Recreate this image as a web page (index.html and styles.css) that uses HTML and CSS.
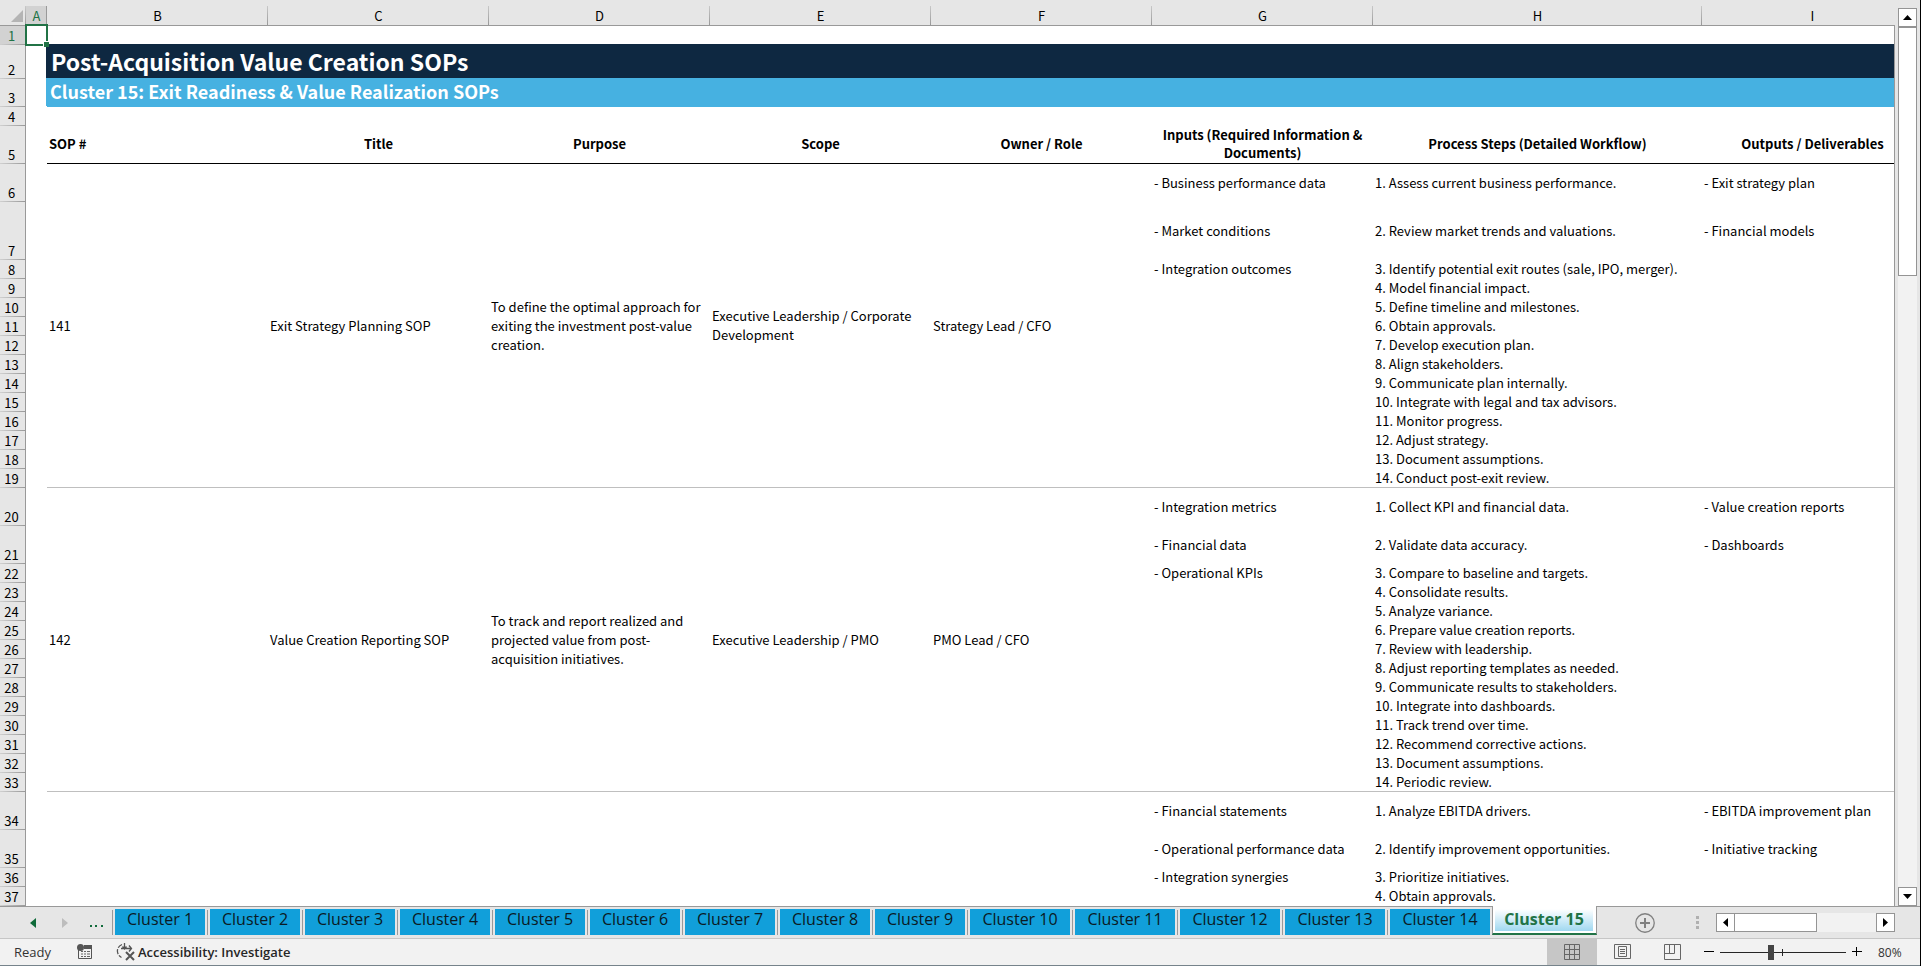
FILE: index.html
```
<!DOCTYPE html>
<html lang="en">
<head>
  <meta charset="UTF-8">
  <meta name="viewport" content="width=device-width, initial-scale=1.0">
  <title>Post-Acquisition Value Creation SOPs</title>
  <link rel="stylesheet" href="styles.css">
</head>
<body>

<main class="workspace">
  <div class="sheet">
    <table class="grid">
      <colgroup>
        <col class="col-num"><col class="col-a"><col class="col-std"><col class="col-std"><col class="col-std">
        <col class="col-std"><col class="col-std"><col class="col-std"><col class="col-wide"><col class="col-std">
      </colgroup>
      <thead>
        <tr>
          <th class="corner"><svg width="12" height="12" viewBox="0 0 12 12"><path d="M12 0v12H0z" fill="#b4b4b4"/></svg></th>
          <th class="selected" scope="col">A</th>
          <th scope="col">B</th>
          <th scope="col">C</th>
          <th scope="col">D</th>
          <th scope="col">E</th>
          <th scope="col">F</th>
          <th scope="col">G</th>
          <th scope="col">H</th>
          <th scope="col">I</th>
        </tr>
      </thead>
      <tbody>
        <tr><th class="selected" scope="row">1</th><td class="active-cell"></td><td colspan="8"></td></tr>
        <tr class="row-title"><th scope="row">2</th><td></td><td class="band-dark" colspan="8">Post-Acquisition Value Creation SOPs</td></tr>
        <tr class="row-subtitle"><th scope="row">3</th><td></td><td class="band-blue" colspan="8">Cluster 15: Exit Readiness &amp; Value Realization SOPs</td></tr>
        <tr><th scope="row">4</th><td></td><td colspan="8"></td></tr>
        <tr class="tall labels">
          <th scope="row">5</th><td></td>
          <td class="left">SOP #</td>
          <td>Title</td>
          <td>Purpose</td>
          <td>Scope</td>
          <td>Owner / Role</td>
          <td>Inputs (Required Information &amp; Documents)</td>
          <td>Process Steps (Detailed Workflow)</td>
          <td>Outputs / Deliverables</td>
        </tr>

        <!-- SOP 141 -->
        <tr class="tall">
          <th scope="row">6</th><td></td>
          <td class="merged" rowspan="14">141</td>
          <td class="merged" rowspan="14">Exit Strategy Planning SOP</td>
          <td class="merged" rowspan="14">To define the optimal approach for exiting the investment post-value creation.</td>
          <td class="merged" rowspan="14">Executive Leadership / Corporate Development</td>
          <td class="merged" rowspan="14">Strategy Lead / CFO</td>
          <td>- Business performance data</td><td>1. Assess current business performance.</td><td>- Exit strategy plan</td>
        </tr>
        <tr class="taller"><th scope="row">7</th><td></td><td>- Market conditions</td><td>2. Review market trends and valuations.</td><td>- Financial models</td></tr>
        <tr><th scope="row">8</th><td></td><td>- Integration outcomes</td><td>3. Identify potential exit routes (sale, IPO, merger).</td><td></td></tr>
        <tr><th scope="row">9</th><td></td><td></td><td>4. Model financial impact.</td><td></td></tr>
        <tr><th scope="row">10</th><td></td><td></td><td>5. Define timeline and milestones.</td><td></td></tr>
        <tr><th scope="row">11</th><td></td><td></td><td>6. Obtain approvals.</td><td></td></tr>
        <tr><th scope="row">12</th><td></td><td></td><td>7. Develop execution plan.</td><td></td></tr>
        <tr><th scope="row">13</th><td></td><td></td><td>8. Align stakeholders.</td><td></td></tr>
        <tr><th scope="row">14</th><td></td><td></td><td>9. Communicate plan internally.</td><td></td></tr>
        <tr><th scope="row">15</th><td></td><td></td><td>10. Integrate with legal and tax advisors.</td><td></td></tr>
        <tr><th scope="row">16</th><td></td><td></td><td>11. Monitor progress.</td><td></td></tr>
        <tr><th scope="row">17</th><td></td><td></td><td>12. Adjust strategy.</td><td></td></tr>
        <tr><th scope="row">18</th><td></td><td></td><td>13. Document assumptions.</td><td></td></tr>
        <tr class="last"><th scope="row">19</th><td></td><td></td><td>14. Conduct post-exit review.</td><td></td></tr>

        <!-- SOP 142 -->
        <tr class="tall">
          <th scope="row">20</th><td></td>
          <td class="merged" rowspan="14">142</td>
          <td class="merged" rowspan="14">Value Creation Reporting SOP</td>
          <td class="merged" rowspan="14">To track and report realized and projected value from post-acquisition initiatives.</td>
          <td class="merged" rowspan="14">Executive Leadership / PMO</td>
          <td class="merged" rowspan="14">PMO Lead / CFO</td>
          <td>- Integration metrics</td><td>1. Collect KPI and financial data.</td><td>- Value creation reports</td>
        </tr>
        <tr class="tall"><th scope="row">21</th><td></td><td>- Financial data</td><td>2. Validate data accuracy.</td><td>- Dashboards</td></tr>
        <tr><th scope="row">22</th><td></td><td>- Operational KPIs</td><td>3. Compare to baseline and targets.</td><td></td></tr>
        <tr><th scope="row">23</th><td></td><td></td><td>4. Consolidate results.</td><td></td></tr>
        <tr><th scope="row">24</th><td></td><td></td><td>5. Analyze variance.</td><td></td></tr>
        <tr><th scope="row">25</th><td></td><td></td><td>6. Prepare value creation reports.</td><td></td></tr>
        <tr><th scope="row">26</th><td></td><td></td><td>7. Review with leadership.</td><td></td></tr>
        <tr><th scope="row">27</th><td></td><td></td><td>8. Adjust reporting templates as needed.</td><td></td></tr>
        <tr><th scope="row">28</th><td></td><td></td><td>9. Communicate results to stakeholders.</td><td></td></tr>
        <tr><th scope="row">29</th><td></td><td></td><td>10. Integrate into dashboards.</td><td></td></tr>
        <tr><th scope="row">30</th><td></td><td></td><td>11. Track trend over time.</td><td></td></tr>
        <tr><th scope="row">31</th><td></td><td></td><td>12. Recommend corrective actions.</td><td></td></tr>
        <tr><th scope="row">32</th><td></td><td></td><td>13. Document assumptions.</td><td></td></tr>
        <tr class="last"><th scope="row">33</th><td></td><td></td><td>14. Periodic review.</td><td></td></tr>

        <!-- SOP 143 -->
        <tr class="tall">
          <th scope="row">34</th><td></td><td colspan="5"></td>
          <td>- Financial statements</td><td>1. Analyze EBITDA drivers.</td><td>- EBITDA improvement plan</td>
        </tr>
        <tr class="tall"><th scope="row">35</th><td></td><td colspan="5"></td><td>- Operational performance data</td><td>2. Identify improvement opportunities.</td><td>- Initiative tracking</td></tr>
        <tr><th scope="row">36</th><td></td><td colspan="5"></td><td>- Integration synergies</td><td>3. Prioritize initiatives.</td><td></td></tr>
        <tr><th scope="row">37</th><td></td><td colspan="5"></td><td></td><td>4. Obtain approvals.</td><td></td></tr>
      </tbody>
    </table>
  </div>

  <div class="vscroll">
    <button class="scroll-btn" aria-label="Scroll up"><svg width="9" height="5" viewBox="0 0 9 5"><path d="M0 5L4.500 0L9 5z"/></svg></button>
    <div class="vtrack"><div class="vthumb"></div></div>
    <button class="scroll-btn" aria-label="Scroll down"><svg width="9" height="5" viewBox="0 0 9 5"><path d="M0 0h9L4.500 5z"/></svg></button>
  </div>
</main>

<nav class="tabbar">
  <div class="tab-nav">
    <button class="plain" aria-label="Previous sheets"><svg width="6" height="10" viewBox="0 0 6 10"><path d="M6 0v10L0 5z" fill="#0f6b3a"/></svg></button>
    <button class="plain" aria-label="Next sheets"><svg width="6" height="10" viewBox="0 0 6 10"><path d="M0 0v10L6 5z" fill="#bdbdbd"/></svg></button>
    <button class="plain more" aria-label="More sheets"><svg width="13" height="2" viewBox="0 0 13 2"><path d="M0 0h2v2H0zM5 0h2v2H5zM11 0h2v2h-2z" fill="#0f6b3a"/></svg></button>
  </div>
  <div class="tabs">
    <button class="tab">Cluster 1</button>
    <button class="tab">Cluster 2</button>
    <button class="tab">Cluster 3</button>
    <button class="tab">Cluster 4</button>
    <button class="tab">Cluster 5</button>
    <button class="tab">Cluster 6</button>
    <button class="tab">Cluster 7</button>
    <button class="tab">Cluster 8</button>
    <button class="tab">Cluster 9</button>
    <button class="tab wide">Cluster 10</button>
    <button class="tab wide">Cluster 11</button>
    <button class="tab wide">Cluster 12</button>
    <button class="tab wide">Cluster 13</button>
    <button class="tab wide">Cluster 14</button>
    <button class="tab-active"><span>Cluster 15</span></button>
  </div>
  <button class="plain add" aria-label="New sheet">
    <svg width="20" height="20" viewBox="0 0 20 20" fill="none" stroke="#808080"><circle cx="10" cy="10" r="9.250" stroke-width="1.300"/><path d="M10 5v10M5 10h10" stroke-width="2"/></svg>
  </button>
  <div class="hscroll">
    <svg class="grip" width="3" height="13" viewBox="0 0 3 13"><path d="M0 0h3v3H0zM0 5h3v3H0zM0 10h3v3H0z" fill="#b0b0b0"/></svg>
    <button class="scroll-btn" aria-label="Scroll left"><svg width="5" height="9" viewBox="0 0 5 9"><path d="M5 0v9L0 4.500z"/></svg></button>
    <div class="htrack"><div class="hthumb"></div></div>
    <button class="scroll-btn" aria-label="Scroll right"><svg width="5" height="9" viewBox="0 0 5 9"><path d="M0 0v9L5 4.500z"/></svg></button>
  </div>
</nav>

<footer class="statusbar">
  <span class="ready">Ready</span>
  <svg class="macro" width="16" height="16" viewBox="0 0 16 16">
    <path d="M7 1h8v4H7z" fill="#555"/>
    <path d="M1.500 6v8.500h13V4" fill="none" stroke="#555"/>
    <path d="M4 7.500h2M7 7.500h2M10 7.500h3M4 10h2M7 10h2M10 10h3M4 12.500h2M7 12.500h2M10 12.500h3" stroke="#666"/>
    <circle cx="3.500" cy="3.500" r="3.500" fill="#555"/>
  </svg>
  <button class="plain access">
    <svg width="20" height="18" viewBox="0 0 20 18" fill="none" stroke="#555">
      <path d="M6 1.500C2.500 3 1 6 1.500 9c.4 2.500 2 4.500 4 5.500" stroke-width="1.300" stroke-dasharray="5 1.500"/>
      <path d="M8.500 0v6M5 5.500h10M6.500 3.500L8.500 6l2-2.500M13 2.500l2.500 3-2.500 3" stroke-width="1.300"/>
      <path d="M10 9l8 8M18 9l-8 8" stroke-width="2"/>
    </svg>
    Accessibility: Investigate
  </button>
  <div class="views">
    <button class="view on" aria-label="Normal">
      <svg width="17" height="17" viewBox="0 0 17 17" fill="none" stroke="#666"><path d="M.5.500h15v15H.5zM5.500.500v15M10.500.500v15M.5 5.500h15M.5 10.500h15"/></svg>
    </button>
    <button class="view" aria-label="Page layout">
      <svg width="17" height="17" viewBox="0 0 17 17" fill="none" stroke="#666"><path d="M.5.500h16v14H.5zM4.500 2.500h8v10h-8zM6 5.500h5M6 7.500h5M6 9.500h5"/></svg>
    </button>
    <button class="view" aria-label="Page break preview">
      <svg width="17" height="17" viewBox="0 0 17 17" fill="none" stroke="#666"><path d="M.5.500h16v15H.5zM.5 9.500h10V.500M5.500.500v9"/></svg>
    </button>
  </div>
  <div class="zoom">
    <button class="plain" aria-label="Zoom out"><svg width="10" height="10" viewBox="0 0 10 10"><path d="M0 4h10v1H0z"/></svg></button>
    <div class="slider"><input type="range" min="0" max="100" value="40" aria-label="Zoom"></div>
    <button class="plain" aria-label="Zoom in"><svg width="10" height="10" viewBox="0 0 10 10"><path d="M0 4h10v1H0zM4 0h1v9H4z"/></svg></button>
    <button class="plain percent">80%</button>
  </div>
</footer>

</body>
</html>
```
FILE: styles.css
```
* {
  box-sizing: border-box;
}

body {
  display: flex;
  flex-direction: column;
  height: 100vh;
  margin: 0;
  overflow: hidden;
  background: #e6e6e6;
  border-right: 1px solid #000;
  font-family: "Open Sans", sans-serif;
}

button {
  padding: 0;
  border: none;
  font-family: inherit;
  cursor: pointer;
}

svg {
  display: block;
}

.plain {
  display: flex;
  align-items: center;
  background: none;
}

/* worksheet */
.workspace {
  display: flex;
  flex: 1;
  min-height: 0;
}

.sheet {
  position: relative;
  flex: 1;
  min-width: 0;
  overflow: hidden;
}

.sheet::after {
  content: "";
  position: absolute;
  top: 25px;
  right: 0;
  bottom: 0;
  width: 1px;
  background: #999;
}

.grid {
  table-layout: fixed;
  width: 1923px;
  border-collapse: separate;
  border-spacing: 0;
  background: #fff;
  font-family: "Noto Sans CJK SC", sans-serif;
  font-size: 13px;
  line-height: 17px;
  color: #000;
}

.col-num { width: 26px; }
.col-a { width: 21px; }
.col-std { width: 221px; }
.col-wide { width: 329px; }

.grid th {
  padding: 0;
  font-weight: normal;
}

.grid td {
  height: 19px;
  padding: 0 2px 2px;
  vertical-align: middle;
}

.grid thead th {
  height: 26px;
  padding-top: 6px;
  border-bottom: 1px solid #999;
  background: linear-gradient(#c8c8c8, #999) right bottom / 1px 19px no-repeat #e6e6e6;
}

.grid thead .corner {
  padding: 7px 0 0 11px;
}

.grid tbody th {
  padding-right: 2px;
  border-right: 1px solid #999;
  background: linear-gradient(90deg, #d0d0d0, #999) left bottom / 100% 1px no-repeat #e6e6e6;
  line-height: 18px;
  vertical-align: bottom;
}

.grid thead th.selected {
  background: linear-gradient(#999, #999) right bottom / 1px 19px no-repeat,
    linear-gradient(#d2d2d2, #d2d2d2) left bottom / 100% 19px no-repeat #e6e6e6;
  color: #217346;
}

.grid tbody th.selected {
  background-color: #d2d2d2;
  color: #217346;
}

.grid .active-cell {
  position: relative;
}

.active-cell::before {
  content: "";
  position: absolute;
  inset: -2px -1px -1px -1px;
  border: 2px solid #217346;
}

.active-cell::after {
  content: "";
  position: absolute;
  right: -2px;
  bottom: -2px;
  width: 5px;
  height: 5px;
  border: solid #fff;
  border-width: 1px 0 0 1px;
  box-sizing: content-box;
  background: #217346;
}

.row-title td { height: 34px; }
.row-subtitle td { height: 28px; }
.tall td { height: 38px; }
.taller td { height: 58px; }

.grid .band-dark,
.grid .band-blue {
  color: #fff;
  font-weight: bold;
}

.grid .band-dark {
  padding: 0 4px 2px;
  background: #0e2841;
  box-shadow: -1px -1px #0e2841;
  font-size: 23px;
  line-height: 32px;
}

.grid .band-blue {
  padding: 0 3px 4px;
  background: #46b1e1;
  box-shadow: -1px -1px #46b1e1;
  font-size: 18px;
  line-height: 24px;
}

.labels td {
  line-height: 18px;
  text-align: center;
  font-weight: bold;
}

.labels td.left {
  text-align: left;
}

.labels td:nth-child(n+3) {
  box-shadow: inset 0 -1px #000;
}

.merged {
  line-height: 19px;
}

.merged,
.last td:nth-child(n+3) {
  box-shadow: inset 0 -1px #bfbfbf;
}

/* scroll bars */
.scroll-btn {
  display: flex;
  align-items: center;
  justify-content: center;
  width: 19px;
  height: 19px;
  border: 1px solid #949494;
  background: #fff;
}

.vscroll {
  display: flex;
  flex-direction: column;
  width: 19px;
  margin: 8px 3px 0 3px;
}

.vtrack {
  flex: 1;
  background: #f2f2f2;
}

.vthumb {
  height: 249px;
  border: 1px solid #949494;
  background: #fff;
}

/* sheet tabs */
.tabbar {
  display: flex;
  height: 32px;
  border-top: 1px solid #999;
}

.tab-nav {
  display: flex;
  gap: 26px;
  width: 112px;
  padding-left: 30px;
}

.tab-nav .more {
  margin-left: -4px;
  padding-top: 6px;
}

.tabs {
  display: flex;
}

/* thin divider sits in the gap left of every tab */
.tab {
  width: 95px;
  height: 28px;
  padding: 0 2px 4px 3px;
  border: none;
  background: linear-gradient(#999, #999) left bottom / 1px 25px no-repeat,
    linear-gradient(#119fda, #119fda) 3px 2px / calc(100% - 5px) 26px no-repeat;
  font-size: 16px;
  line-height: 20px;
  color: #0b1a24;
}

.tab.wide {
  width: 105px;
}

.tab-active {
  width: 105px;
  height: 29px;
  margin-top: -1px;
  padding: 3px 3px 2px 2px;
  border-left: 1px solid #999;
  border-right: 1px solid #999;
  border-bottom: 2px solid #217346;
  background: #fff;
  font-size: 16px;
  font-weight: bold;
  color: #217346;
}

.tab-active span {
  display: block;
  height: 22px;
  background: linear-gradient(#fff, #a0d8f0);
  line-height: 21px;
}

.add {
  margin: 0 auto 0 38px;
}

.hscroll {
  display: flex;
  align-items: center;
  margin-right: 25px;
}

.grip {
  margin-right: 17px;
}

.htrack {
  width: 141px;
  height: 19px;
  background: #f2f2f2;
}

.hthumb {
  width: 82px;
  height: 19px;
  border: 1px solid #949494;
  border-left: none;
  background: #fff;
}

/* status bar */
.statusbar {
  display: flex;
  align-items: center;
  height: 28px;
  border-top: 1px solid #c6c6c6;
  border-bottom: 1px solid #76838b;
  background: #f2f2f2;
  font-size: 13px;
  color: #333;
}

.ready {
  width: 77px;
  padding-left: 14px;
}

.macro {
  margin-right: 23px;
}

.access {
  gap: 2px;
  font-size: 13px;
  font-weight: 600;
  color: #262626;
}

.views {
  display: flex;
  align-self: stretch;
  margin-left: auto;
}

.view {
  display: flex;
  align-items: center;
  justify-content: center;
  width: 50px;
  background: none;
}

.view.on {
  background: #c6c6c6;
}

.zoom {
  display: flex;
  align-items: center;
  gap: 6px;
  width: 223px;
  padding-left: 7px;
}

.slider {
  position: relative;
  display: flex;
  width: 126px;
}

.slider::before {
  content: "";
  position: absolute;
  top: 4px;
  left: 62px;
  width: 1px;
  height: 7px;
  background: #262626;
}

.slider input {
  width: 100%;
  height: 15px;
  margin: 0;
  appearance: none;
  background: linear-gradient(#262626, #262626) center / 100% 1px no-repeat;
}

.slider input::-webkit-slider-thumb {
  appearance: none;
  width: 6px;
  height: 15px;
  background: #444;
}

.percent {
  margin-left: 10px;
  font-size: 12px;
  color: #333;
}
```
